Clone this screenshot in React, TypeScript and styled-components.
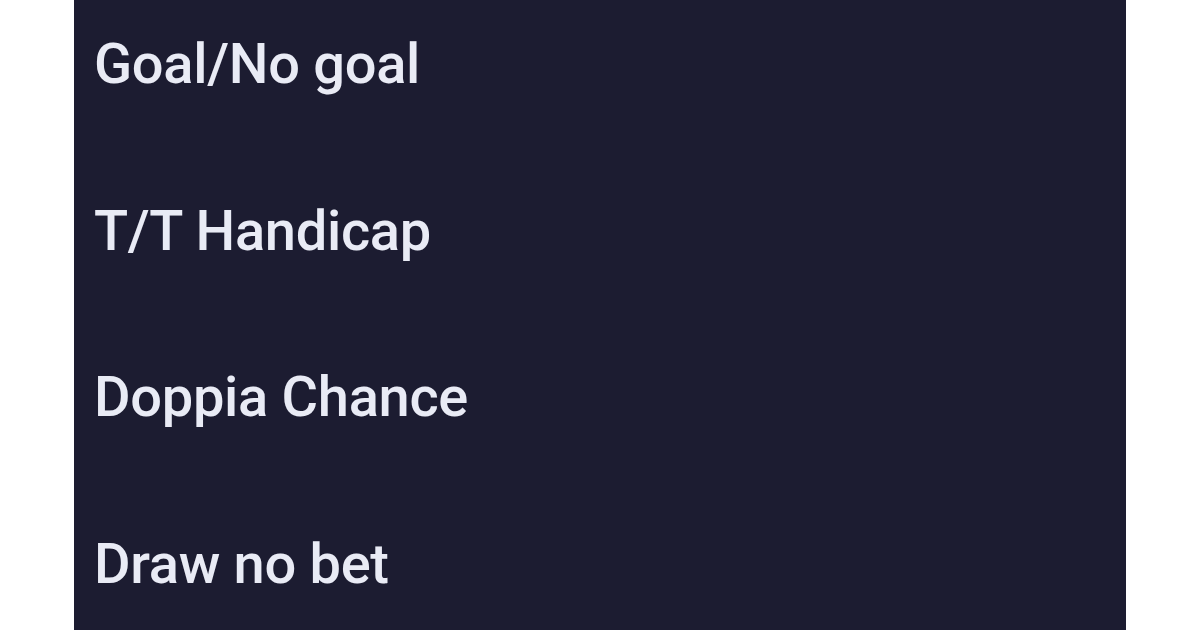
import React from "react";
import styled, { createGlobalStyle } from "styled-components";

const Global = createGlobalStyle`
  html, body { margin: 0; padding: 0; background: #ffffff; }
  body { font-family: Roboto, "Noto Sans", sans-serif; }
`;

const Page = styled.div`
  width: 1200px;
  height: 630px;
  overflow: hidden;
  padding-left: 74px;
  box-sizing: border-box;
`;

const Panel = styled.ul`
  list-style: none;
  margin: 0;
  width: 1052px;
  height: 630px;
  background: #1c1c31;
  box-sizing: border-box;
  padding: 31px 0 0 20px;
  display: flex;
  flex-direction: column;
  gap: 100.67px;
`;

const Item = styled.li`
  font-size: 56px;
  line-height: 66px;
  font-weight: 500;
  letter-spacing: -0.3px;
  color: #e9ebf5;
  white-space: nowrap;
`;

const markets = ["Goal/No goal", "T/T Handicap", "Doppia Chance", "Draw no bet"];

export default function App() {
  return (
    <>
      <Global />
      <Page>
        <Panel>
          {markets.map((m) => (
            <Item key={m}>{m}</Item>
          ))}
        </Panel>
      </Page>
    </>
  );
}
